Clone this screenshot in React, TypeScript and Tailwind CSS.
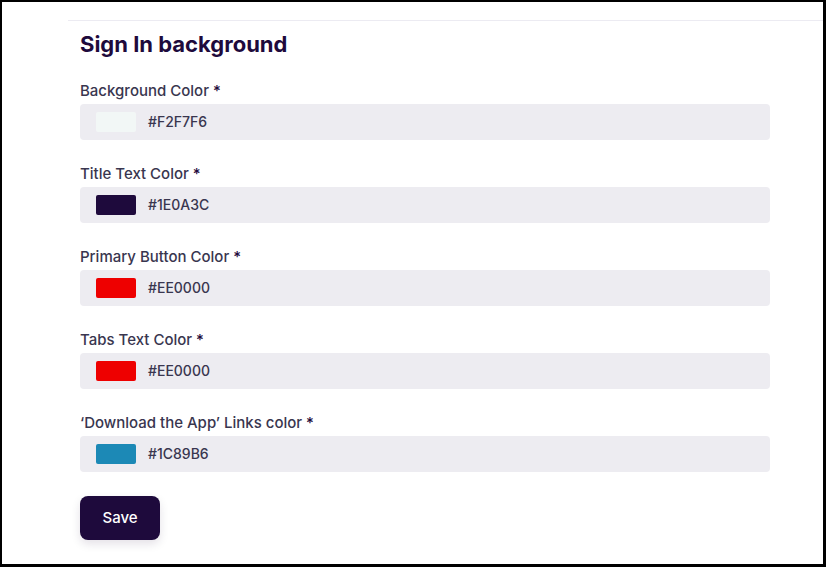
const fields = [
  { label: "Background Color", value: "#F2F7F6" },
  { label: "Title Text Color", value: "#1E0A3C" },
  { label: "Primary Button Color", value: "#EE0000" },
  { label: "Tabs Text Color", value: "#EE0000" },
  { label: "\u2018Download the App\u2019 Links color", value: "#1C89B6" },
]

export default function App() {
  return (
    <div
      className="w-[826px] h-[567px] bg-white border-black border-t-2 border-l-2 border-r-[3px] border-b-[3px] overflow-hidden"
      style={{ fontFamily: "Inter, 'Noto Sans', sans-serif" }}
    >
      <div className="mt-[18px] ml-[66px] h-px bg-[#ecebf2]" />
      <div className="pl-[78px] pt-[9px]">
        <h2 className="text-[22px] leading-[28px] font-bold text-[#1e0a3c]">
          Sign In background
        </h2>
        <div className="mt-[22px] flex flex-col gap-[23px] w-[690px]">
          {fields.map((f) => (
            <div key={f.label}>
              <label className="block text-[15px] leading-[20px] font-medium text-[#39364f] pt-px">
                {f.label} <span className="text-[#1e0a3c]">*</span>
              </label>
              <div className="mt-[3px] h-9 rounded bg-[#edecf1] flex items-center pl-4">
                <div className="w-10 h-5 rounded-[2px]" style={{ backgroundColor: f.value }} />
                <span className="ml-3 pb-px text-[14px] font-medium text-[#39364f]">{f.value}</span>
              </div>
            </div>
          ))}
        </div>
        <button className="mt-6 w-20 h-11 rounded-lg bg-[#1e0a3c] text-white text-[15px] font-medium shadow-[0_4px_10px_rgba(30,10,60,0.12)]">
          Save
        </button>
      </div>
    </div>
  )
}
